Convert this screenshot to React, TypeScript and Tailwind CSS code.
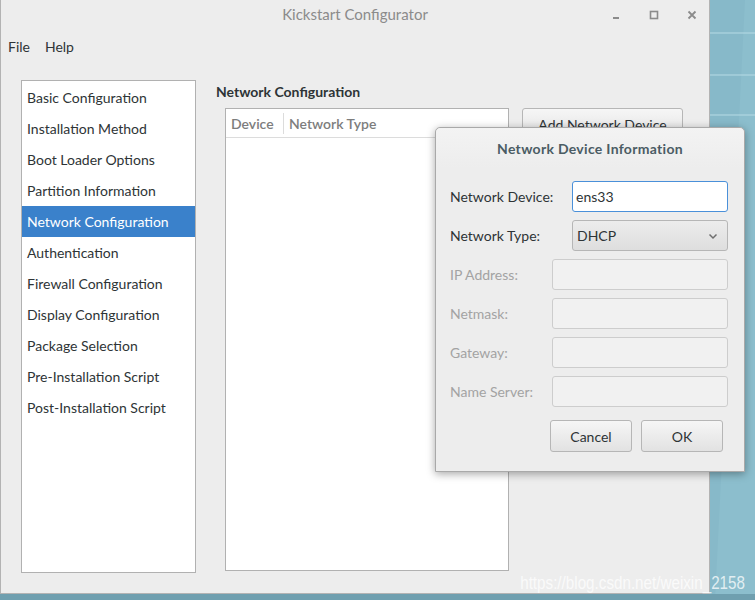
import React from 'react';

const sections = [
  'Basic Configuration',
  'Installation Method',
  'Boot Loader Options',
  'Partition Information',
  'Network Configuration',
  'Authentication',
  'Firewall Configuration',
  'Display Configuration',
  'Package Selection',
  'Pre-Installation Script',
  'Post-Installation Script',
];

const disabledFields = ['IP Address:', 'Netmask:', 'Gateway:', 'Name Server:'];

function Desktop() {
  return (
    <svg className="absolute inset-0" width="755" height="600" viewBox="0 0 755 600">
      <rect width="755" height="600" fill="#87b9c9" />
      <polygon points="755,0 745,0 715,600 755,600" fill="#8cbecd" />
      <line x1="700" y1="33" x2="755" y2="33" stroke="#b6dbe5" strokeWidth="1" />
      <line x1="700" y1="75" x2="755" y2="75" stroke="#b6dbe5" strokeWidth="1" />
      <line x1="700" y1="115" x2="755" y2="115" stroke="#b6dbe5" strokeWidth="1" />
      <rect x="0" y="594" width="755" height="6" fill="#6f9faf" />
    </svg>
  );
}

function Field({ disabled, value }: { disabled?: boolean; value?: string }) {
  if (disabled) {
    return <div className="h-[31px] flex-1 rounded-[3px] border border-[#cdcdcd] bg-[#f1f1f1]" />;
  }
  return (
    <div className="h-[31px] flex-1 rounded-[3px] border border-[#4a90d9] bg-white flex items-center px-[3px] text-[#2e3436]">
      {value}
    </div>
  );
}

export default function App() {
  return (
    <div
      className="relative w-[755px] h-[600px] overflow-hidden text-[14px]"
      style={{ fontFamily: 'Lato, "Open Sans", sans-serif' }}
    >
      <Desktop />

      {/* main window */}
      <div className="absolute left-0 top-0 w-[710px] h-[594px] bg-[#ededed] border-l border-r border-b border-[#b3b3b3] flex flex-col">
        <div className="relative h-[29px] flex items-center justify-center text-[15px] text-[#8b8b8b]">
          Kickstart Configurator
          <div className="absolute right-[11px] top-0 h-[29px] flex items-center gap-[26px] text-[#8b8b8b]">
            <svg width="12" height="12" viewBox="0 0 12 12">
              <rect x="3" y="8" width="6" height="2" fill="#8b8b8b" />
            </svg>
            <svg width="12" height="12" viewBox="0 0 12 12">
              <rect x="2.5" y="2.5" width="7" height="7" fill="none" stroke="#8b8b8b" strokeWidth="1.6" />
            </svg>
            <svg width="12" height="12" viewBox="0 0 12 12">
              <path d="M2.5 2.5 L9.5 9.5 M9.5 2.5 L2.5 9.5" stroke="#8b8b8b" strokeWidth="1.8" />
            </svg>
          </div>
        </div>

        <div className="h-[34px] flex items-center gap-[15px] pl-[7px] text-[#2e3436]">
          <span>File</span>
          <span>Help</span>
        </div>

        <div className="flex pt-[17px] pl-[20px]">
          <div className="w-[175px] h-[493px] bg-white border border-[#b1b1b1] pt-[1px] text-[#2e3436]">
            {sections.map((s) => (
              <div
                key={s}
                className={
                  s === 'Network Configuration'
                    ? 'h-[31px] flex items-center pl-[5px] bg-[#3a81cb] text-white'
                    : 'h-[31px] flex items-center pl-[5px]'
                }
              >
                {s}
              </div>
            ))}
          </div>

          <div className="ml-[20px] flex flex-col">
            <div className="h-[22px] flex items-center font-bold text-[#2e3436]">Network Configuration</div>
            <div className="flex mt-[6px] ml-[9px] gap-[13px]">
              <div className="w-[284px] h-[463px] bg-white border border-[#b1b1b1] flex flex-col">
                <div className="h-[29px] flex items-center border-b border-[#dcdcdc] text-[#7d7d7d] font-semibold">
                  <div className="w-[58px] pl-[5px] border-r border-[#dcdcdc]">Device</div>
                  <div className="pl-[5px]">Network Type</div>
                </div>
              </div>
              <div className="w-[161px] h-[32px] rounded-[3px] border border-[#b6b6b6] bg-gradient-to-b from-[#f6f6f6] to-[#e2e2e2] flex items-center justify-center text-[#2e3436]">
                Add Network Device
              </div>
            </div>
          </div>
        </div>
      </div>

      {/* dialog */}
      <div className="absolute left-[435px] top-[127px] w-[310px] h-[345px] bg-[#ededed] border border-[#a9a9a9] rounded-t-[5px] shadow-[0_2px_8px_rgba(0,0,0,0.35)] flex flex-col">
        <div className="h-[40px] flex items-center justify-center font-bold tracking-[0.3px] text-[#4b5c64] rounded-t-[5px] bg-gradient-to-b from-[#f3f3f3] to-[#ededed]">
          Network Device Information
        </div>
        <div className="flex flex-col gap-[8px] pt-[13px] pl-[14px] pr-[16px]">
          <div className="flex items-center">
            <div className="w-[122px] text-[#2e3436]">Network Device:</div>
            <Field value="ens33" />
          </div>
          <div className="flex items-center">
            <div className="w-[122px] text-[#2e3436]">Network Type:</div>
            <div className="h-[31px] flex-1 rounded-[3px] border border-[#b6b6b6] bg-gradient-to-b from-[#ececec] to-[#dedede] flex items-center justify-between pl-[4px] pr-[8px] text-[#2e3436]">
              DHCP
              <svg width="12" height="12" viewBox="0 0 12 12">
                <path d="M2.5 4.5 L6 8 L9.5 4.5" fill="none" stroke="#6e6e6e" strokeWidth="1.5" />
              </svg>
            </div>
          </div>
          {disabledFields.map((f) => (
            <div key={f} className="flex items-center">
              <div className="w-[102px] text-[#a3a3a3]">{f}</div>
              <Field disabled />
            </div>
          ))}
          <div className="flex justify-end gap-[9px] mt-[5px] pr-[5px]">
            <div className="w-[82px] h-[32px] rounded-[3px] border border-[#b6b6b6] bg-gradient-to-b from-[#f6f6f6] to-[#e2e2e2] flex items-center justify-center text-[#2e3436]">
              Cancel
            </div>
            <div className="w-[82px] h-[32px] rounded-[3px] border border-[#b6b6b6] bg-gradient-to-b from-[#f6f6f6] to-[#e2e2e2] flex items-center justify-center text-[#2e3436]">
              OK
            </div>
          </div>
        </div>
      </div>

      {/* watermark */}
      <div
        className="absolute right-[10px] top-[569px] text-[19px] text-white/75 origin-right scale-x-[0.8] whitespace-nowrap"
        style={{ fontFamily: '"Liberation Sans", sans-serif' }}
      >
        https://blog.csdn.net/weixin_2158
      </div>
    </div>
  );
}
